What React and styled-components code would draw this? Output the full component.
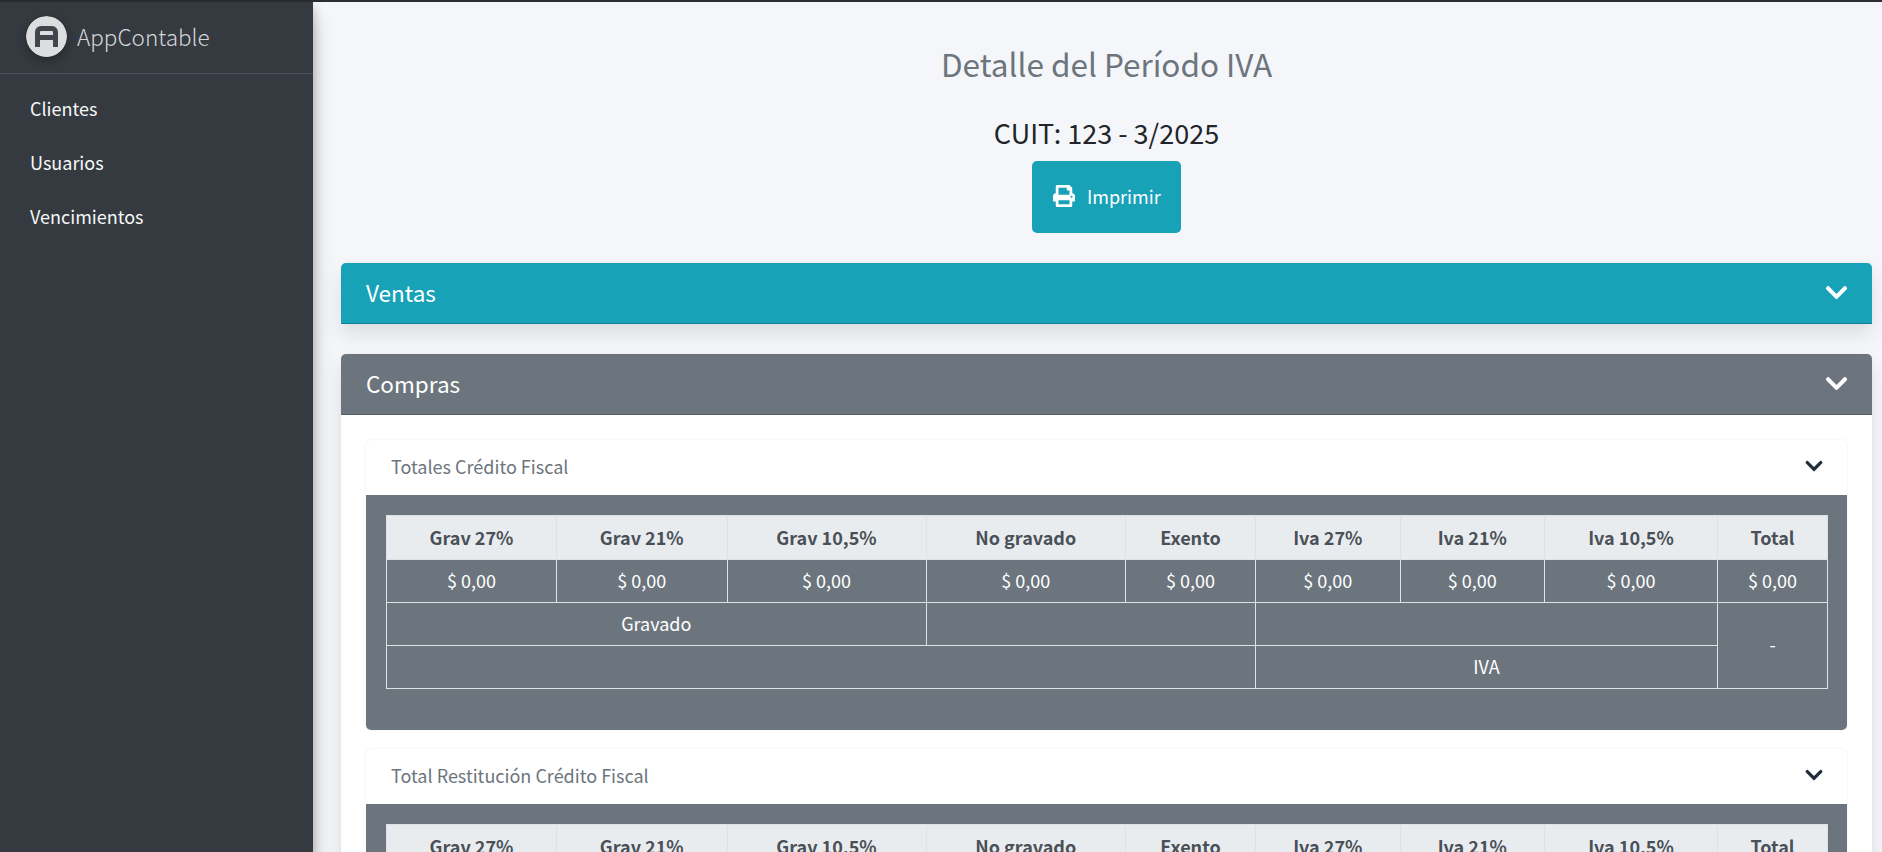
import React from "react";
import styled, { createGlobalStyle } from "styled-components";
import { FaPrint, FaChevronDown } from "react-icons/fa";

const FONT = `"Noto Sans CJK SC", "Noto Sans", sans-serif`;

const Global = createGlobalStyle`
  html, body { margin: 0; padding: 0; height: 100%; overflow: hidden; }
  body { font-family: ${FONT}; font-size: 18px; line-height: 30px; color: #212529; background: #f4f6f9; }
  * { box-sizing: border-box; }
`;

const Page = styled.div`
  height: 852px;
  display: flex;
  flex-direction: column;
  overflow: hidden;
`;
const TopLine = styled.div`
  height: 2px;
  flex: none;
  background: #2b2f33;
`;
const Shell = styled.div`
  flex: 1;
  min-height: 0;
  display: flex;
`;
const Sidebar = styled.aside`
  width: 313px;
  flex: none;
  background: #343a40;
  box-shadow: 0 17px 21px rgba(0, 0, 0, .2), 0 5px 10px rgba(0, 0, 0, .25);
  position: relative;
  z-index: 2;
`;
const Brand = styled.div`
  height: 72px;
  display: flex;
  align-items: center;
  gap: 10px;
  padding: 0 0 0 26px;
  border-bottom: 1px solid #4b545c;
`;
const LogoCircle = styled.svg`
  width: 41px;
  height: 41px;
  margin-top: -2px;
  border-radius: 50%;
  box-shadow: 0 4px 10px rgba(0, 0, 0, .3);
`;
const BrandName = styled.span`
  font-size: 22.5px;
  line-height: 30px;
  margin-top: -3px;
  font-weight: 300;
  color: rgba(255, 255, 255, .8);
`;
const Nav = styled.nav`
  display: flex;
  flex-direction: column;
  padding: 7px 0 0 30px;
`;
const NavItem = styled.a`
  height: 54px;
  display: flex;
  align-items: center;
  font-size: 18px;
  color: #f6f7f8;
`;
const Main = styled.main`
  flex: 1;
  min-width: 0;
  padding: 0 10px 0 28px;
`;
const Title = styled.h1`
  margin: 0;
  padding-top: 40px;
  height: 109px;
  text-align: center;
  font-size: 31.5px;
  line-height: 42px;
  font-weight: 400;
  color: #6c757d;
`;
const Sub = styled.h2`
  margin: 0;
  height: 50px;
  text-align: center;
  font-size: 27px;
  line-height: 43px;
  font-weight: 400;
  color: #212529;
`;
const ButtonRow = styled.div`
  display: flex;
  justify-content: center;
  margin-bottom: 30px;
`;
const PrintButton = styled.button`
  width: 149px;
  height: 72px;
  display: flex;
  align-items: center;
  gap: 12px;
  padding: 0 0 2px 21px;
  border: 0;
  border-radius: 5px;
  background: #17a2b8;
  color: #fff;
  font-family: ${FONT};
  font-size: 18px;
  line-height: 30px;
  svg { width: 22px; height: 22px; flex: none; }
`;
const Card = styled.section`
  border-radius: 5px;
  background: ${p => (p.$open ? "#fff" : "transparent")};
  box-shadow: 0 0 1px rgba(0, 0, 0, .125), 0 10px 20px rgba(0, 0, 0, .1);
  margin-bottom: 30px;
`;
const CardHeader = styled.header`
  height: 61px;
  display: flex;
  align-items: center;
  justify-content: space-between;
  padding: 0 23px 2px 25px;
  border-radius: 5px 5px 0 0;
  background: ${p => p.$color};
  border-bottom: 1px solid rgba(0, 0, 0, .2);
  color: #fff;
  font-size: 22.5px;
  svg { width: 25px; height: 25px; }
`;
const CardBody = styled.div`
  padding: 25px;
`;
const Inner = styled.div`
  border-radius: 5px;
  background: #fff;
  box-shadow: 0 0 2px rgba(0, 0, 0, .1);
  margin-bottom: 19px;
`;
const InnerHeader = styled.header`
  height: 55px;
  display: flex;
  align-items: center;
  justify-content: space-between;
  padding: 0 23px 3px 25px;
  font-size: 18px;
  color: #6c757d;
  svg { width: 20px; height: 20px; color: #1f2d3d; }
`;
const InnerBody = styled.div`
  border-radius: 0 0 5px 5px;
  background: #6c757d;
  padding: 20px 20px 41px;
`;
const Table = styled.table`
  width: 100%;
  table-layout: fixed;
  border-collapse: collapse;
  color: #fff;
  text-align: center;
  font-size: 18px;
`;
const Th = styled.th`
  height: 44px;
  padding: 0 0 1px;
  background: #e9ecef;
  color: #495057;
  font-weight: 700;
  border: 1px solid #dee2e6;
`;
const Td = styled.td`
  height: 43px;
  padding: 0 0 3px;
  border: 1px solid #dee2e6;
`;

const WIDTHS = [170, 170.5, 199, 199.5, 130, 144.5, 144.5, 173, 110];
const HEAD = ["Grav 27%", "Grav 21%", "Grav 10,5%", "No gravado", "Exento", "Iva 27%", "Iva 21%", "Iva 10,5%", "Total"];

function Totals() {
  return (
    <Table>
      <colgroup>{WIDTHS.map((w, i) => <col key={i} style={{ width: w }} />)}</colgroup>
      <thead>
        <tr>{HEAD.map(h => <Th key={h}>{h}</Th>)}</tr>
      </thead>
      <tbody>
        <tr>{HEAD.map(h => <Td key={h}>$ 0,00</Td>)}</tr>
        <tr>
          <Td colSpan={3}>Gravado</Td>
          <Td colSpan={2} />
          <Td colSpan={3} />
          <Td rowSpan={2}>-</Td>
        </tr>
        <tr>
          <Td colSpan={5} />
          <Td colSpan={3}>IVA</Td>
        </tr>
      </tbody>
    </Table>
  );
}

function InnerCard({ title }) {
  return (
    <Inner>
      <InnerHeader>{title}<FaChevronDown /></InnerHeader>
      <InnerBody><Totals /></InnerBody>
    </Inner>
  );
}

export default function App() {
  return (
    <Page>
      <Global />
      <TopLine />
      <Shell>
        <Sidebar>
          <Brand>
            <LogoCircle viewBox="0 0 41 41">
              <circle cx="20.5" cy="20.5" r="20.5" fill="#dcddde" />
              <path fillRule="evenodd" fill="#41464c" d="M15 10h11a6 6 0 0 1 6 6v15h-5v-7H14v7H9V16a6 6 0 0 1 6-6zm0 5a1 1 0 0 0-1 1v3h13v-3a1 1 0 0 0-1-1z" />
            </LogoCircle>
            <BrandName>AppContable</BrandName>
          </Brand>
          <Nav>
            <NavItem>Clientes</NavItem>
            <NavItem>Usuarios</NavItem>
            <NavItem>Vencimientos</NavItem>
          </Nav>
        </Sidebar>
        <Main>
          <Title>Detalle del Período IVA</Title>
          <Sub>CUIT: 123 - 3/2025</Sub>
          <ButtonRow>
            <PrintButton><FaPrint />Imprimir</PrintButton>
          </ButtonRow>
          <Card>
            <CardHeader $color="#17a2b8">Ventas<FaChevronDown /></CardHeader>
          </Card>
          <Card $open>
            <CardHeader $color="#6c757d">Compras<FaChevronDown /></CardHeader>
            <CardBody>
              <InnerCard title="Totales Crédito Fiscal" />
              <InnerCard title="Total Restitución Crédito Fiscal" />
            </CardBody>
          </Card>
        </Main>
      </Shell>
    </Page>
  );
}
